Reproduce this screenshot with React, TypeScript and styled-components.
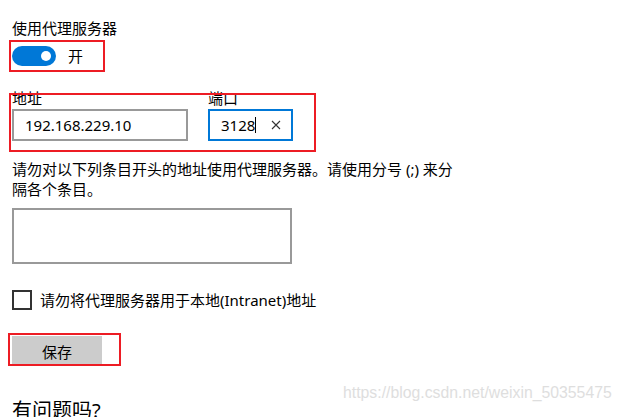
import React from 'react';
import styled, { createGlobalStyle } from 'styled-components';

const GlobalStyle = createGlobalStyle`
  html, body {
    margin: 0;
    padding: 0;
    background: #fff;
  }
  body {
    font-family: "Noto Sans", "Noto Sans CJK SC", sans-serif;
    color: #000;
  }
`;

const Page = styled.div`
  position: relative;
  width: 619px;
  height: 417px;
  overflow: hidden;
  padding: 18px 0 0 12px;
  box-sizing: border-box;
`;

const Text = styled.div`
  font-size: 15px;
  line-height: 20px;
  color: #000;
`;

const Marked = styled.div`
  position: relative;
`;

// red annotation rectangle drawn over the screenshot
const Highlight = styled.div<{ $top: number; $left: number; $w: number; $h: number }>`
  position: absolute;
  top: ${(p) => p.$top}px;
  left: ${(p) => p.$left}px;
  width: ${(p) => p.$w}px;
  height: ${(p) => p.$h}px;
  border: 2px solid #ed1c24;
  box-sizing: border-box;
  pointer-events: none;
`;

const ToggleRow = styled.div`
  display: flex;
  align-items: center;
  gap: 12px;
  margin-top: 8px;
  height: 20px;
`;

const Toggle = styled.div<{ $on: boolean }>`
  position: relative;
  width: 44px;
  height: 20px;
  border-radius: 10px;
  background: ${(p) => (p.$on ? '#0078d7' : '#fff')};
  box-sizing: border-box;

  &::after {
    content: '';
    position: absolute;
    top: 5px;
    ${(p) => (p.$on ? 'right: 5px;' : 'left: 5px;')}
    width: 10px;
    height: 10px;
    border-radius: 50%;
    background: ${(p) => (p.$on ? '#fff' : '#333')};
  }
`;

const Fields = styled.div`
  display: flex;
  gap: 20px;
  margin-top: 22px;
`;

const Field = styled.div`
  display: flex;
  flex-direction: column;
  gap: 1px;
`;

const Box = styled.div<{ $w: number; $focus?: boolean }>`
  display: flex;
  align-items: center;
  width: ${(p) => p.$w}px;
  height: 32px;
  box-sizing: border-box;
  border: 2px solid ${(p) => (p.$focus ? '#0078d7' : '#999')};
  padding: 0 10px 0 11px;
  font-size: 15px;
  color: #000;
`;

const Caret = styled.span`
  display: inline-block;
  width: 1px;
  height: 16px;
  background: #000;
`;

const ClearIcon = styled.svg`
  margin-left: auto;
`;

const Description = styled(Text)`
  margin-top: 18px;
  width: 450px;
`;

const TextArea = styled.div`
  width: 280px;
  height: 56px;
  box-sizing: border-box;
  border: 2px solid #999;
  margin-top: 9px;
`;

const CheckRow = styled.div`
  display: flex;
  align-items: center;
  gap: 8px;
  margin-top: 26px;
`;

const CheckBox = styled.div`
  width: 20px;
  height: 20px;
  box-sizing: border-box;
  border: 2px solid #333;
`;

const ButtonWrap = styled(Marked)`
  margin-top: 26px;
  width: 90px;
`;

const SaveButton = styled.button`
  display: block;
  width: 90px;
  height: 30px;
  border: none;
  background: #ccc;
  font-family: inherit;
  font-size: 15px;
  color: #000;
  padding: 0;
`;

const Heading = styled.div`
  margin-top: 31px;
  font-size: 20px;
  line-height: 28px;
  color: #000;
`;

const Watermark = styled.div`
  position: absolute;
  left: 343px;
  top: 384px;
  font-family: "Liberation Sans", Arial, sans-serif;
  font-size: 15.8px;
  color: #dedede;
  white-space: nowrap;
`;

export default function App() {
  return (
    <>
      <GlobalStyle />
      <Page>
        <Text>使用代理服务器</Text>

        <Marked>
          <ToggleRow>
            <Toggle $on />
            <Text>开</Text>
          </ToggleRow>
          <Highlight $top={-6} $left={-3} $w={96} $h={32} />
        </Marked>

        <Marked>
          <Fields>
            <Field>
              <Text>地址</Text>
              <Box $w={176}>192.168.229.10</Box>
            </Field>
            <Field>
              <Text>端口</Text>
              <Box $w={85} $focus>
                3128
                <Caret />
                <ClearIcon width="10" height="10" viewBox="0 0 10 10">
                  <path d="M1 1 L9 9 M9 1 L1 9" stroke="#333" strokeWidth="1.1" fill="none" />
                </ClearIcon>
              </Box>
            </Field>
          </Fields>
          <Highlight $top={5} $left={-3} $w={307} $h={59} />
        </Marked>

        <Description>
          请勿对以下列条目开头的地址使用代理服务器。请使用分号 (;) 来分隔各个条目。
        </Description>
        <TextArea />

        <CheckRow>
          <CheckBox />
          <Text>请勿将代理服务器用于本地(Intranet)地址</Text>
        </CheckRow>

        <ButtonWrap>
          <SaveButton>保存</SaveButton>
          <Highlight $top={-3} $left={-4} $w={113} $h={33} />
        </ButtonWrap>

        <Heading>有问题吗?</Heading>

        <Watermark>https://blog.csdn.net/weixin_50355475</Watermark>
      </Page>
    </>
  );
}
